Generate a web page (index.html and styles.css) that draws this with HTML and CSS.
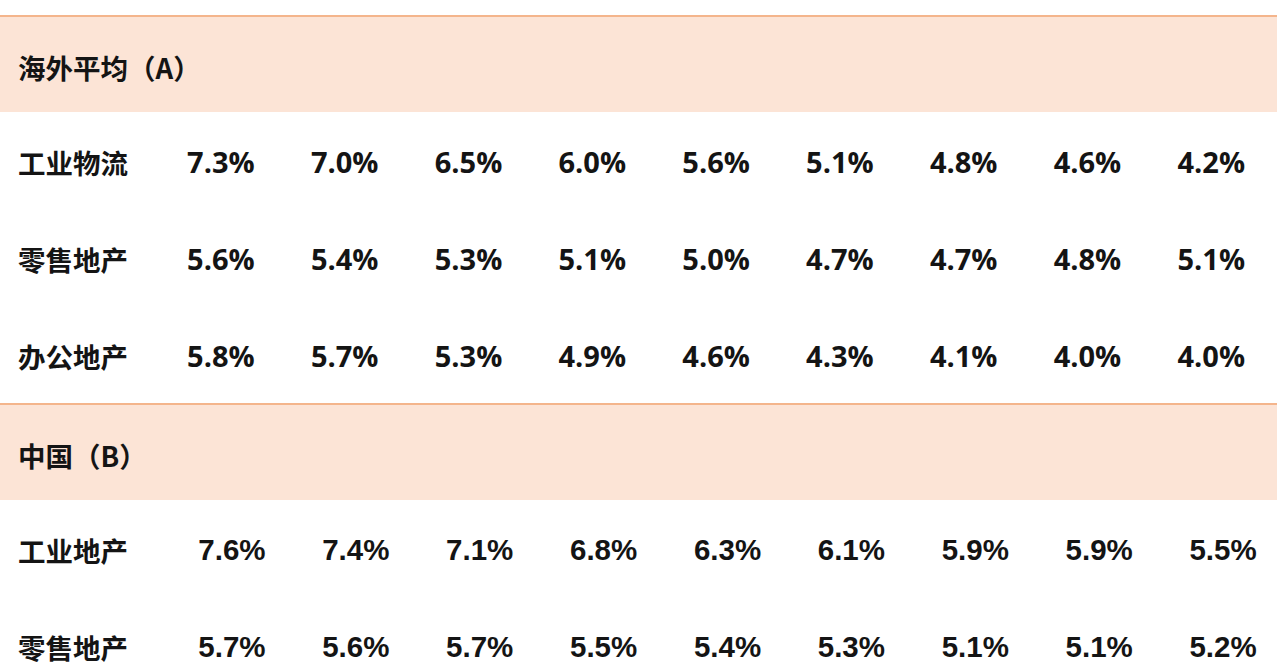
FILE: index.html
```html
<!DOCTYPE html>
<html lang="zh">
<head>
<meta charset="utf-8">
<link rel="stylesheet" href="styles.css">
</head>
<body>
<div class="table">
  <div class="row head"><div class="label">海外平均（A）</div></div>
  <div class="row a"><div class="label">工业物流</div><div>7.3%</div><div>7.0%</div><div>6.5%</div><div>6.0%</div><div>5.6%</div><div>5.1%</div><div>4.8%</div><div>4.6%</div><div>4.2%</div></div>
  <div class="row a"><div class="label">零售地产</div><div>5.6%</div><div>5.4%</div><div>5.3%</div><div>5.1%</div><div>5.0%</div><div>4.7%</div><div>4.7%</div><div>4.8%</div><div>5.1%</div></div>
  <div class="row a"><div class="label">办公地产</div><div>5.8%</div><div>5.7%</div><div>5.3%</div><div>4.9%</div><div>4.6%</div><div>4.3%</div><div>4.1%</div><div>4.0%</div><div>4.0%</div></div>
  <div class="row head"><div class="label">中国（B）</div></div>
  <div class="row b"><div class="label">工业地产</div><div>7.6%</div><div>7.4%</div><div>7.1%</div><div>6.8%</div><div>6.3%</div><div>6.1%</div><div>5.9%</div><div>5.9%</div><div>5.5%</div></div>
  <div class="row b"><div class="label">零售地产</div><div>5.7%</div><div>5.6%</div><div>5.7%</div><div>5.5%</div><div>5.4%</div><div>5.3%</div><div>5.1%</div><div>5.1%</div><div>5.2%</div></div>
</div>
</body>
</html>
```
FILE: styles.css
```css
html, body {
  margin: 0;
  padding: 0;
  background: #ffffff;
  overflow: hidden;
}
.table {
  padding-top: 15px;
  width: 1277px;
  color: #141414;
  font-weight: 700;
}
.row {
  display: grid;
  height: 97px;
  box-sizing: border-box;
  align-items: center;
  text-align: center;
}
.row .label {
  text-align: left;
  padding-left: 18px;
  font-family: "Noto Sans CJK SC", sans-serif;
  font-size: 27.5px;
  font-weight: 700;
  padding-top: 2px;
}
.head {
  background: #fce4d6;
  border-top: 2px solid #f4b58c;
  grid-template-columns: 1fr;
}
.head .label {
  padding-top: 4px;
}
.a {
  grid-template-columns: 159px repeat(9, 123.8px);
  font-family: "Open Sans", sans-serif;
  font-size: 29px;
}
.b {
  grid-template-columns: 170px repeat(9, 123.9px);
  font-family: "Liberation Sans", Arial, sans-serif;
  font-size: 29.5px;
}
.a > div:not(.label), .b > div:not(.label) {
  padding-top: 2px;
}
```
